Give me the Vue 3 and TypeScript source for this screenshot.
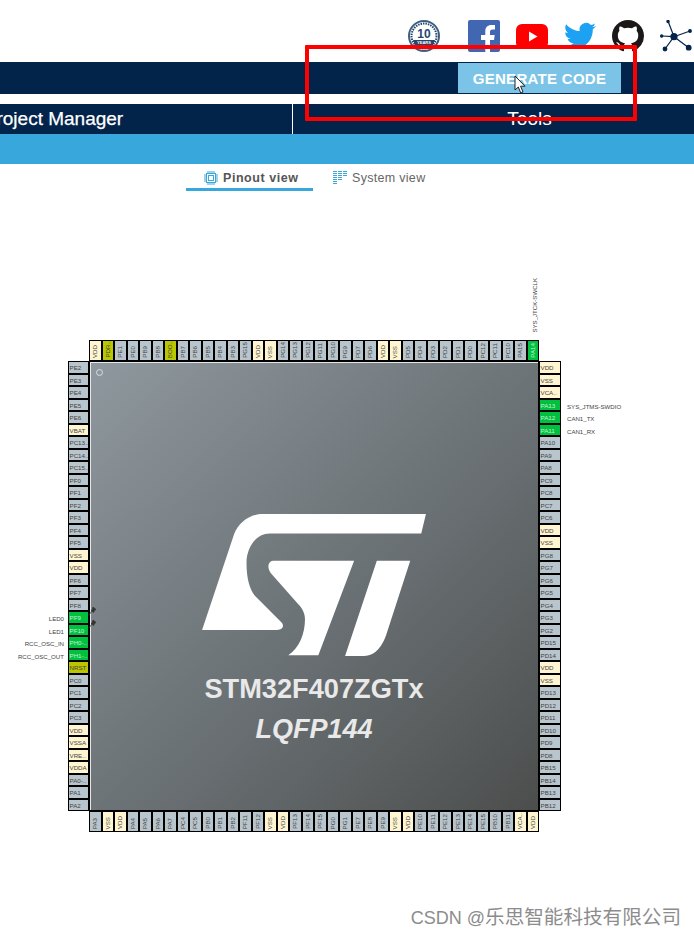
<template>
  <div class="page">
    <header class="social">
      <svg class="ico badge" viewBox="0 0 32 32">
        <circle cx="16" cy="16" r="15" fill="#fff" stroke="#3f5f80" stroke-width="2" />
        <circle cx="16" cy="16" r="12.5" fill="none" stroke="#24476e" stroke-width="2" stroke-dasharray="1.5 1" />
        <circle cx="16" cy="16" r="10.5" fill="#fff" />
        <text x="16" y="18" class="badge-num">10</text>
        <path d="M5 20 L27 20 L25 25 L7 25 Z" fill="#24476e" />
        <text x="16" y="24" class="badge-txt">YEARS</text>
      </svg>
      <svg class="ico fb" viewBox="0 0 32 32">
        <rect width="32" height="32" rx="2" fill="#4267b2" />
        <path d="M22 32V20h4l.7-5H22v-3c0-1.500.6-2.500 2.600-2.500H27V5.100C26.500 5 25 5 23.400 5 19.800 5 17.300 7.200 17.300 11.200V15H13v5h4.300v12z" fill="#fff" />
      </svg>
      <svg class="ico" viewBox="0 0 32 32">
        <rect x="0" y="4" width="32" height="25" rx="6" fill="#fe0000" />
        <path d="M13 11.500 21.500 16.500 13 21.500z" fill="#fff" />
      </svg>
      <svg class="ico" viewBox="0 0 24 24">
        <path fill="#1da1f2" d="M23.953 4.570a10 10 0 01-2.825.775 4.958 4.958 0 002.163-2.723c-.951.555-2.005.959-3.127 1.184a4.920 4.920 0 00-8.384 4.482C7.690 8.095 4.067 6.130 1.640 3.162a4.822 4.822 0 00-.666 2.475c0 1.710.870 3.213 2.188 4.096a4.904 4.904 0 01-2.228-.616v.060a4.923 4.923 0 003.946 4.827 4.996 4.996 0 01-2.212.085 4.936 4.936 0 004.604 3.417 9.867 9.867 0 01-6.102 2.105c-.390 0-.779-.023-1.170-.067a13.995 13.995 0 007.557 2.209c9.053 0 13.998-7.496 13.998-13.985 0-.210 0-.420-.015-.630A9.935 9.935 0 0024 4.590z" />
      </svg>
      <svg class="ico" viewBox="0 0 16 16">
        <path fill="#1b1817" d="M8 0C3.580 0 0 3.580 0 8c0 3.540 2.290 6.530 5.470 7.590.400.070.550-.170.550-.380 0-.190-.010-.820-.010-1.490-2.010.370-2.530-.490-2.690-.940-.090-.230-.480-.940-.820-1.130-.280-.150-.680-.520-.010-.530.630-.010 1.080.580 1.230.820.720 1.210 1.870.870 2.330.660.070-.520.280-.870.510-1.070-1.780-.200-3.640-.890-3.640-3.950 0-.870.310-1.590.820-2.150-.080-.200-.360-1.020.080-2.120 0 0 .670-.210 2.200.820.640-.180 1.320-.270 2-.270.680 0 1.360.090 2 .270 1.530-1.040 2.200-.820 2.200-.820.440 1.100.160 1.920.080 2.120.510.560.820 1.270.820 2.150 0 3.070-1.870 3.750-3.650 3.950.290.250.540.730.540 1.480 0 1.070-.010 1.930-.010 2.200 0 .210.150.460.550.380A8.013 8.013 0 0016 8c0-4.420-3.580-8-8-8z" />
      </svg>
      <svg class="ico" viewBox="0 0 32 32">
        <g stroke="#03234b" stroke-width="1.200" fill="#03234b">
          <path d="M14 16.700 8 1M14 16.700 1.700 16M14 16.700 5 29M14 16.700 30 11M14 16.700 28.700 27.700" fill="none" />
          <circle cx="14" cy="16.700" r="3.600" stroke="none" />
          <circle cx="8" cy="1.500" r="1.100" />
          <circle cx="1.700" cy="16" r="1.100" />
          <circle cx="5" cy="29" r="1.800" />
          <circle cx="30" cy="11" r="1.300" />
          <circle cx="28.700" cy="27.700" r="2.300" />
        </g>
      </svg>
    </header>

    <div class="action-bar">
      <button class="generate">GENERATE CODE</button>
    </div>

    <nav class="tabs-main">
      <div class="tab-main first">Project Manager</div>
      <div class="tab-main divided">Tools</div>
    </nav>

    <div class="blue-bar"></div>

    <div class="views">
      <div class="view active">
        <svg class="view-ico" viewBox="0 0 14 14" fill="none" stroke="#38a8dc">
          <rect x="2.500" y="2.500" width="9" height="9" />
          <rect x="4.500" y="4.500" width="5" height="5" />
          <path d="M4 0v2M6 0v2M8 0v2M10 0v2M4 12v2M6 12v2M8 12v2M10 12v2M0 4h2M0 6h2M0 8h2M0 10h2M12 4h2M12 6h2M12 8h2M12 10h2" />
        </svg>
        <span>Pinout view</span>
      </div>
      <div class="view">
        <svg class="view-ico" viewBox="0 0 14 14" fill="none" stroke="#38a8dc">
          <path d="M0 .5h4M5 .5h4M10 .5h4M0 2.500h4M5 2.500h4M10 2.500h4M0 4.500h4M5 4.500h4M10 4.500h4M0 6.500h4M5 6.500h4M0 8.500h4M5 8.500h4M0 10.500h4M0 12.500h4" />
        </svg>
        <span>System view</span>
      </div>
    </div>

    <section class="package">
      <div class="corner"></div>
      <div class="strip strip-h">
        <div v-for="(p, i) in top" :key="i" class="pin pin-v" :class="kind(p, 'top')">
          <span>{{ p }}</span>
          <em v-if="p === 'PA14'" class="signal signal-top">SYS_JTCK-SWCLK</em>
        </div>
      </div>
      <div class="corner"></div>

      <div class="strip strip-v">
        <div v-for="(p, i) in left" :key="i" class="pin" :class="kind(p, 'left')">
          <span>{{ p }}</span>
          <em v-if="leftSignals[p]" class="signal signal-left">{{ leftSignals[p] }}</em>
          <svg v-if="p === 'PF9' || p === 'PF10'" class="pushpin" viewBox="0 0 8 9">
            <path d="M5 0 8 2.500 6.500 3.500 5.500 5.500 3 3.500 4.500 2.500zM3.500 4.500 0.500 8.500" fill="#333" stroke="#333" stroke-width=".8" />
          </svg>
        </div>
      </div>

      <div class="chip">
        <i class="dot"></i>
        <svg class="logo" viewBox="37 45 670 425">
          <path fill="#fff" d="M707 45 693 103H240C195 103 170 150 170 190C170 240 180 270 195 290L275 370C285 382 275 392 262 392H37L133 105C147 70 180 45 220 45Z" />
          <path fill="#fff" d="M250 185H492L385 468H295C330 445 345 400 345 360C345 340 335 325 325 315L243 222C230 205 235 185 250 185Z" />
          <path fill="#fff" d="M560 185H660L587 410C570 455 545 470 520 470H465Z" />
        </svg>
        <div class="part">STM32F407ZGTx</div>
        <div class="case">LQFP144</div>
      </div>

      <div class="strip strip-v">
        <div v-for="(p, i) in right" :key="i" class="pin" :class="kind(p, 'right')">
          <span>{{ p }}</span>
          <em v-if="rightSignals[p]" class="signal signal-right">{{ rightSignals[p] }}</em>
        </div>
      </div>

      <div class="corner"></div>
      <div class="strip strip-h">
        <div v-for="(p, i) in bottom" :key="i" class="pin pin-v" :class="kind(p, 'bottom')">
          <span>{{ p }}</span>
        </div>
      </div>
      <div class="corner"></div>
    </section>

    <div class="annotation"></div>
    <svg class="cursor" viewBox="0 0 13 19">
      <path d="M1 1V15L4.300 12 6.800 18 9 17 6.600 11.200H11Z" fill="#fff" stroke="#222" stroke-width="1" />
    </svg>
    <div class="watermark">CSDN @<span class="wm-cjk">乐思智能科技有限公司</span></div>
  </div>
</template>

<script setup lang="ts">
type Side = 'top' | 'left' | 'right' | 'bottom'

const top = 'VDD PDR.. PE1 PE0 PB9 PB8 BOO.. PB7 PB6 PB5 PB4 PB3 PG15 VDD VSS PG14 PG13 PG12 PG11 PG10 PG9 PD7 PD6 VDD VSS PD5 PD4 PD3 PD2 PD1 PD0 PC12 PC11 PC10 PA15 PA14'.split(' ')
const left = 'PE2 PE3 PE4 PE5 PE6 VBAT PC13.. PC14.. PC15.. PF0 PF1 PF2 PF3 PF4 PF5 VSS VDD PF6 PF7 PF8 PF9 PF10 PH0-.. PH1-.. NRST PC0 PC1 PC2 PC3 VDD VSSA VRE.. VDDA PA0-.. PA1 PA2'.split(' ')
const right = 'VDD VSS VCA.. PA13 PA12 PA11 PA10 PA9 PA8 PC9 PC8 PC7 PC6 VDD VSS PG8 PG7 PG6 PG5 PG4 PG3 PG2 PD15 PD14 VDD VSS PD13 PD12 PD11 PD10 PD9 PD8 PB15 PB14 PB13 PB12'.split(' ')
const bottom = 'PA3 VSS VDD PA4 PA5 PA6 PA7 PC4 PC5 PB0 PB1 PB2 PF11 PF12 VSS VDD PF13 PF14 PF15 PG0 PG1 PE7 PE8 PE9 VSS VDD PE10 PE11 PE12 PE13 PE14 PE15 PB10 PB11 VCA.. VDD'.split(' ')

const leftSignals: Record<string, string> = {
  PF9: 'LED0',
  PF10: 'LED1',
  'PH0-..': 'RCC_OSC_IN',
  'PH1-..': 'RCC_OSC_OUT',
}
const rightSignals: Record<string, string> = {
  PA13: 'SYS_JTMS-SWDIO',
  PA12: 'CAN1_TX',
  PA11: 'CAN1_RX',
}

const power = ['VDD', 'VSS', 'VSSA', 'VDDA', 'VBAT', 'VCA..', 'VRE..']
const reset = ['PDR..', 'BOO..', 'NRST']

function kind(name: string, side: Side) {
  if (power.includes(name)) return 'power'
  if (reset.includes(name)) return 'reset'
  if (side === 'top' && name === 'PA14') return 'used'
  if (side === 'left' && leftSignals[name]) return 'used'
  if (side === 'right' && rightSignals[name]) return 'used'
  return ''
}
</script>

<style>
html, body { margin: 0; background: #fff; overflow: hidden; }
</style>

<style scoped>
.page {
  position: relative; width: 694px; height: 934px; overflow: hidden;
  background: #fff; font-family: "Liberation Sans", Arial, sans-serif;
}

.social {
  display: flex; justify-content: flex-end; align-items: flex-start;
  gap: 16px; height: 62px; padding: 20px 2px 0 0; box-sizing: border-box;
}
.ico { width: 32px; height: 32px; flex: none; }
.badge { margin-right: 12px; }
.badge-num { font: bold 12px "Liberation Sans", sans-serif; text-anchor: middle; fill: #24476e; }
.badge-txt { font: bold 4px "Liberation Sans", sans-serif; text-anchor: middle; fill: #fff; }

.action-bar { display: flex; justify-content: flex-end; height: 32px; background: #02234a; padding: 1px 73px 1px 0; box-sizing: border-box; }
.generate {
  width: 163px; height: 30px; border: 0; padding: 0; background: #7bc4e8; color: #fff;
  font: bold 15px "Liberation Sans", sans-serif; letter-spacing: .3px;
}

.tabs-main { display: flex; width: 951px; height: 30px; margin: 10px 0 0 -185px; background: #02234a; }
.tab-main {
  flex: none; width: 474px; box-sizing: border-box; display: flex; align-items: center; justify-content: center;
  color: #fff; font-size: 19px;
}
.tab-main.first { width: 477px; -webkit-text-stroke: .25px #fff; }
.tab-main.divided { border-left: 1px solid #fff; }

.blue-bar { height: 30px; background: #38a8dc; }

.views { display: flex; height: 27px; padding-left: 186px; }
.view {
  display: flex; align-items: center; gap: 5px; height: 24px; padding: 4px 0 0 20px; box-sizing: border-box;
  color: #666; font-size: 12.500px; letter-spacing: .3px;
}
.view.active {
  width: 127px; padding-left: 18px; color: #555; font-weight: 700; letter-spacing: .55px;
  border-bottom: 3px solid #38a8dc; height: 27px;
}
.view-ico { width: 14px; height: 14px; flex: none; }

.package {
  display: grid; grid-template-columns: 21px 450px 22px; grid-template-rows: 21px 450px 21px;
  margin: 149px 0 0 68px; width: 493px;
}
.strip { display: grid; gap: 2px; padding: 1px; background: #000; box-sizing: border-box; }
.strip-h { grid-template-columns: repeat(36, 1fr); }
.strip-v { grid-template-rows: repeat(36, 1fr); }

.pin {
  position: relative; display: flex; align-items: center; min-width: 0; min-height: 0;
  background: #b9c5cc; color: #444; font-size: 6.200px; line-height: 1; white-space: nowrap;
}
.pin span { padding-left: .5px; transform: translateY(1px); }
.pin-v { align-items: flex-end; justify-content: center; }
.pin-v span { writing-mode: vertical-rl; transform: rotate(180deg); padding: 0; margin-bottom: 2px; }
.power { background: #fff6d1; }
.reset { background: #b9c600; }
.used { background: #00c13f; color: #c8f0d4; }

.signal { position: absolute; font-style: normal; color: #444; font-size: 6.100px; }
.signal-left { right: calc(100% + 5px); transform: translateY(1.500px); }
.signal-right { left: calc(100% + 7px); transform: translateY(1.500px); }
.signal-top {
  bottom: calc(100% + 8px); left: 4px;
  writing-mode: vertical-rl; transform: rotate(180deg);
}
.pushpin { position: absolute; left: 19px; top: -5px; width: 8px; height: 9px; z-index: 2; }

.chip {
  position: relative; display: flex; flex-direction: column; align-items: center;
  padding-top: 152px; box-sizing: border-box;
  border: 1px solid #000;
  box-shadow: inset 1px 1px 0 #e4e6e7;
  background: linear-gradient(135deg, #8f989e 0%, #6d7478 50%, #4c4e4d 100%);
}
.dot {
  position: absolute; left: 6px; top: 7px; width: 5px; height: 5px; border-radius: 50%;
  background: #8f989e; border: 1px solid #d8dcdf;
}
.logo { width: 224px; height: 142px; flex: none; }
.part { margin-top: 17px; color: #e9e9e9; font-size: 27.200px; font-weight: 700; line-height: 32px; }
.case { margin-top: 8px; color: #e9e9e9; font-size: 27px; font-weight: 700; font-style: italic; line-height: 32px; }

.annotation {
  position: absolute; left: 305px; top: 45px; width: 332px; height: 76px; box-sizing: border-box;
  border: 4px solid #f00; border-radius: 1px;
}
.cursor { position: absolute; left: 514px; top: 75px; width: 13px; height: 19px; }
.watermark {
  position: absolute; right: 13px; top: 901px; color: #8c8c8c; font-size: 18px;
  font-family: "Liberation Sans", "Noto Sans CJK SC", sans-serif; white-space: nowrap;
}
.wm-cjk { font-size: 19.600px; }
</style>
